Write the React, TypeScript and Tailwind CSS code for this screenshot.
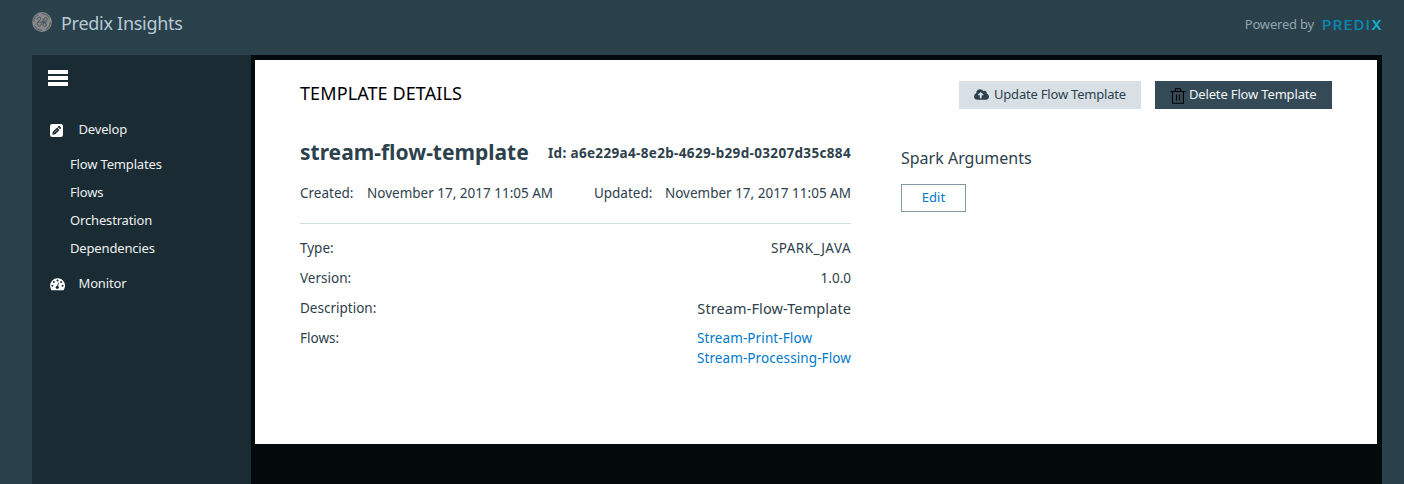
import { FaCloudUploadAlt } from "react-icons/fa";

function Monogram() {
  return (
    <svg className="mt-[12px] size-[20px] shrink-0" viewBox="0 0 20 20" fill="none">
      <circle cx="10" cy="10" r="9.9" fill="#85878a" />
      <circle cx="10" cy="10" r="8.300" stroke="#3d4d55" strokeWidth="0.8" strokeDasharray="9 4" />
      <path
        d="M5 7.500c1-3 4-3 3.800-.8C8.600 8.500 5.500 9 5.300 11.500c-.2 2.500 2.500 3.400 3.700 1.500l3-6.200c1-2 3.500-1.300 3 .7-.5 1.700-3 1.800-4.600 2.200M6.500 10c2 .8 3-.6 4 .2 2 .6 3.900 1 3.700 3-.2 2-3.200 1.500-3.200-.7 0-2 3-1.800 4-3"
        stroke="#3d4d55"
        strokeWidth="0.9"
      />
    </svg>
  );
}

function PredixLogo() {
  return (
    <div className="ml-[8px] mt-[17px] h-[18px] w-[61px] shrink-0">
      <div className="origin-left scale-x-[1.17] whitespace-nowrap font-['Inter',sans-serif] text-[12.5px] font-semibold leading-[18px] tracking-[1.15px] text-[#0a84b0]">
        PREDI<span className="text-[#12b0d0]">X</span>
      </div>
    </div>
  );
}

function PencilSquareIcon() {
  return (
    <svg className="h-[13px] w-[13px] shrink-0" viewBox="0 0 13 13">
      <rect width="13" height="13" rx="2.2" fill="#fff" />
      <path d="M2.300 10.700l.5-2.900 4.300-4.300 2.400 2.400-4.300 4.300zM7.700 2.900l.8-.8q.5-.4 1 0l1.400 1.400q.4.500 0 1l-.8.8z" fill="#1b2b33" />
      <path d="M4.300 8.500l3-3" stroke="#fff" strokeWidth="0.5" />
    </svg>
  );
}

function GaugeIcon() {
  return (
    <svg className="h-[13px] w-[15px] shrink-0" viewBox="0 0 15 13">
      <path d="M7.500.3a7.400 7.400 0 0 0-7.400 7.400c0 1.500.4 2.800 1.100 4q.3.500.8.500h11q.5 0 .8-.5a7.400 7.400 0 0 0-6.300-11.400z" fill="#fff" />
      <g fill="#1b2b33">
        <circle cx="2.400" cy="7.700" r="1" />
        <circle cx="3.900" cy="4" r="1" />
        <circle cx="7.500" cy="2.500" r="1" />
        <circle cx="11.100" cy="4" r="1" />
        <circle cx="12.600" cy="7.700" r="1" />
        <circle cx="7.300" cy="9.300" r="1.600" />
      </g>
      <path d="M7.400 9l1-4" stroke="#1b2b33" strokeWidth="0.9" strokeLinecap="round" />
    </svg>
  );
}

function TrashIcon() {
  return (
    <svg className="mt-[2px] h-[16px] w-[16px] shrink-0" viewBox="0 0 16 16" fill="none" stroke="#000" strokeWidth="1.100">
      <path d="M.5 3.500h15M5.500 3.500v-2.700h5v2.700M2.500 3.500v11.700h11v-11.700M6.500 6.500v6M9.500 6.500v6" />
    </svg>
  );
}

const links = ["Flow Templates", "Flows", "Orchestration", "Dependencies"];

export default function App() {
  return (
    <div className="h-[484px] w-[1404px] overflow-hidden bg-[#2a404b] font-['Noto_Sans',sans-serif] text-[13px] text-[#2d414c]">
      <header className="flex h-[55px] items-start pl-[32px] pr-[21px]">
        <Monogram />
        <h1 className="ml-[9px] mt-[9px] text-[18px] leading-[28px] tracking-[-0.28px] text-[#b8cad5]">Predix Insights</h1>
        <span className="ml-auto mt-[14px] text-[13px] leading-[20px] tracking-[-0.2px] text-[#8fa5b1]">Powered by</span>
        <PredixLogo />
      </header>
      <div className="ml-[32px] flex h-[429px] w-[1350px]">
        <nav className="w-[219px] bg-[#1b2b33] tracking-[-0.16px] text-[#ecf0f2]">
          <div className="flex flex-col gap-[2px] pl-[16px] pt-[15px]">
            <div className="h-[4px] w-[20px] bg-white" />
            <div className="h-[4px] w-[20px] bg-white" />
            <div className="h-[4px] w-[20px] bg-white" />
          </div>
          <div className="mt-[30px] flex h-[28px] items-center pl-[18px]">
            <PencilSquareIcon />
            <span className="ml-[15.5px]">Develop</span>
          </div>
          <div className="mt-[6px] pl-[38px]">
            {links.map((label) => (
              <div key={label} className="h-[28px] leading-[28px]">{label}</div>
            ))}
          </div>
          <div className="mt-[8px] flex h-[28px] items-center pl-[18px]">
            <GaugeIcon />
            <span className="ml-[13.5px]">Monitor</span>
          </div>
        </nav>
        <main className="w-[1131px] bg-[#04090c] pl-[4px] pr-[5px] pt-[5px]">
          <section className="h-[384px] bg-white pl-[45px] pr-[45px] pt-[21px]">
            <div className="flex h-[28px] items-start">
              <h2 className="text-[18px] leading-[24px] tracking-[0.1px] text-black">TEMPLATE DETAILS</h2>
              <button className="ml-auto flex h-[28px] w-[182px] items-center bg-[#d8e0e5] pl-[15px]">
                <FaCloudUploadAlt className="mb-[2px] size-[15px] shrink-0" />
                <span className="ml-[5px] whitespace-nowrap tracking-[-0.2px]">Update Flow Template</span>
              </button>
              <button className="ml-[14px] flex h-[28px] w-[177px] items-center bg-[#344b57] pl-[15px] text-[#f0f4f6]">
                <TrashIcon />
                <span className="ml-[3px] whitespace-nowrap tracking-[-0.16px]">Delete Flow Template</span>
              </button>
            </div>
            <div className="flex">
              <div className="w-[551px] shrink-0 whitespace-nowrap text-[13.5px]">
                <div className="flex h-[74px] items-start justify-between pt-[27px]">
                  <h3 className="text-[21px] font-bold leading-[32px]">stream-flow-template</h3>
                  <span className="pt-[7px] text-[13.5px] font-bold leading-[20px] tracking-[0.34px]">Id: a6e229a4-8e2b-4629-b29d-03207d35c884</span>
                </div>
                <div className="flex h-[41px] items-start border-b border-[#d3dcdf] leading-[20px]">
                  <span className="w-[67px]">Created:</span>
                  <span>November 17, 2017 11:05 AM</span>
                  <span className="ml-auto w-[71px]">Updated:</span>
                  <span>November 17, 2017 11:05 AM</span>
                </div>
                <dl className="pt-[9px] leading-[30px]">
                  <div className="flex justify-between"><dt>Type:</dt><dd className="tracking-[0.45px]">SPARK_JAVA</dd></div>
                  <div className="flex justify-between"><dt>Version:</dt><dd>1.0.0</dd></div>
                  <div className="flex justify-between"><dt>Description:</dt><dd className="text-[14.5px] tracking-[0.1px]">Stream-Flow-Template</dd></div>
                  <div className="flex justify-between">
                    <dt>Flows:</dt>
                    <dd className="pt-[5px] leading-[20px] tracking-[0.1px] text-[#007acc]">
                      <a className="block">Stream-Print-Flow</a>
                      <a className="block">Stream-Processing-Flow</a>
                    </dd>
                  </div>
                </dl>
              </div>
              <aside className="ml-[50px] pt-[36px]">
                <h4 className="text-[16px] leading-[26px]">Spark Arguments</h4>
                <button className="mt-[13px] h-[28px] w-[65px] border border-[#8299a5] text-[#007acc]">Edit</button>
              </aside>
            </div>
          </section>
        </main>
      </div>
    </div>
  );
}
